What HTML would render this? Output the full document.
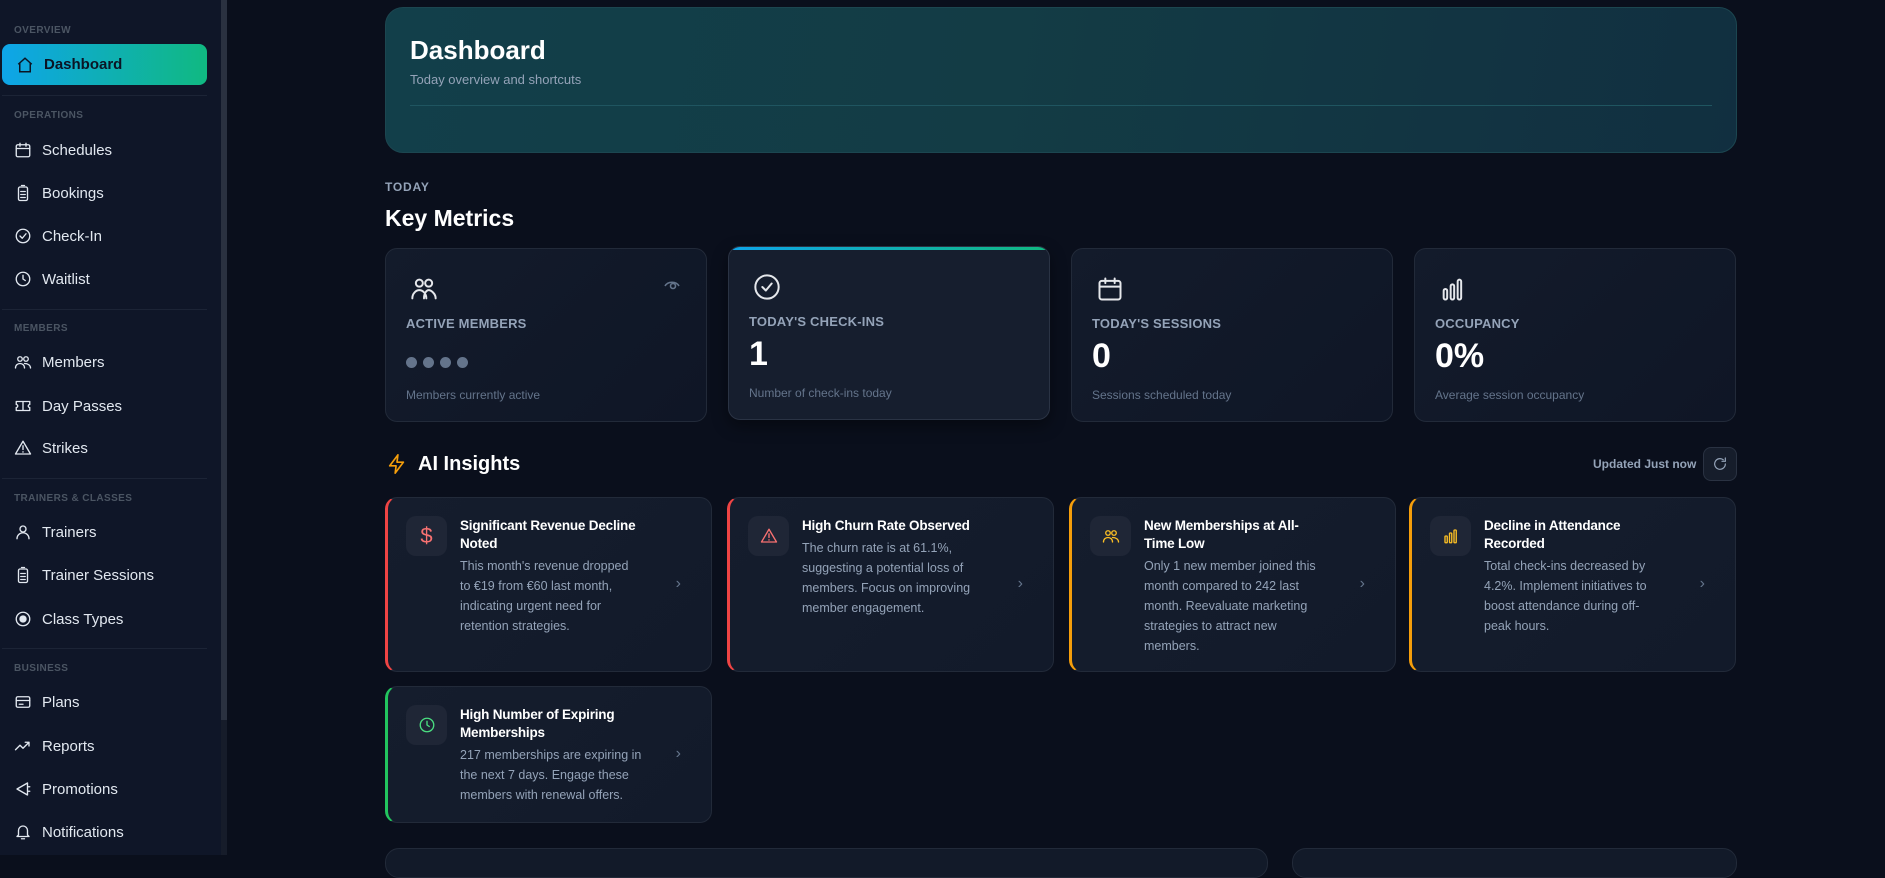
<!DOCTYPE html>
<html><head><meta charset="utf-8"><style>
*{box-sizing:border-box;margin:0;padding:0}
body{width:1885px;height:855px;overflow:hidden;background:#0a0f1c;font-family:"Liberation Sans",sans-serif;color:#e5e7eb;position:relative}
.sb{position:absolute;left:0;top:0;width:221px;height:855px;background:#0f1628}
.scroll{position:absolute;left:221px;top:0;width:6px;height:720px;background:#2a3140}
.scrolltr{position:absolute;left:221px;top:0;width:6px;height:855px;background:#161c2a}
.lbl{position:absolute;left:14px;font-size:10px;font-weight:bold;color:#4b5563;letter-spacing:.4px}
.it{position:absolute;left:14px;height:20px;display:flex;align-items:center;font-size:15px;color:#e2e8f0}
.it svg{width:18px;height:18px;margin-right:10px;stroke:#e2e8f0;fill:none;stroke-width:1.8;stroke-linecap:round;stroke-linejoin:round}
.sep{position:absolute;left:2px;width:205px;height:1px;background:#1c2436}
.act{position:absolute;left:2px;top:44px;width:205px;height:41px;border-radius:8px;background:linear-gradient(90deg,#0ea5e9,#10b981);display:flex;align-items:center;padding-left:14px;font-weight:bold;font-size:15px;color:#0b1424}
.act svg{width:18px;height:18px;margin-right:10px;stroke:#0b1424;fill:none;stroke-width:2}
.hdr{position:absolute;left:385px;top:7px;width:1352px;height:146px;border-radius:18px;background:linear-gradient(100deg,#123f4a 0%,#133c45 45%,#112f40 100%);border:1px solid #1c4650}
.card{position:absolute;top:248px;width:322px;height:174px;border-radius:12px;background:linear-gradient(135deg,#131b2b,#0f1626);border:1px solid #222a39}
.card svg.ic{position:absolute;left:24px;top:26px;width:28px;height:28px;stroke:#e5e7eb;fill:none;stroke-width:1.7;stroke-linecap:round;stroke-linejoin:round}
.card .t{position:absolute;left:20px;top:67px;font-size:13px;color:#94a3b8;font-weight:bold;letter-spacing:.2px}
.card .v{position:absolute;left:20px;top:88px;font-size:34px;font-weight:bold;color:#fff}
.card .s{position:absolute;left:20px;top:139px;font-size:12px;color:#64748b}
.ins{position:absolute;width:327px;border-radius:12px;background:linear-gradient(135deg,#151d2d,#121a2a);border:1px solid #222a39;border-left:3px solid}
.ins .b{position:absolute;left:18px;top:18px;width:41px;height:40px;border-radius:10px;background:#1f2636;display:flex;align-items:center;justify-content:center}
.ins .b svg{width:18px;height:18px;fill:none;stroke-width:1.8;stroke-linecap:round;stroke-linejoin:round}
.ins h4{position:absolute;left:72px;top:19px;width:192px;font-size:13.5px;letter-spacing:-.2px;line-height:18px;color:#fff}
.ins p{position:absolute;left:72px;width:180px;font-size:12.5px;line-height:20px;color:#94a3b8}
.ins .ch{position:absolute;right:30px;font-size:16px;color:#64748b}
</style></head><body>
<div class="sb"></div><div class="scrolltr"></div><div class="scroll"></div>
<div class="lbl" style="top:25px">OVERVIEW</div>
<div class="act"><svg viewBox="0 0 24 24"><path d="M3 11 12 3l9 8M5 9.5V21h14V9.5"/></svg>Dashboard</div>
<div class="sep" style="top:95px"></div>
<div class="lbl" style="top:110px">OPERATIONS</div>
<div class="it" style="top:140px"><svg viewBox="0 0 24 24"><rect x="3" y="5" width="18" height="16" rx="2"/><path d="M3 10h18M8 3v4M16 3v4"/></svg>Schedules</div>
<div class="it" style="top:183px"><svg viewBox="0 0 24 24"><rect x="6" y="4" width="12" height="18" rx="2"/><path d="M10 2h4M9 10h6M9 14h6M9 18h6"/></svg>Bookings</div>
<div class="it" style="top:226px"><svg viewBox="0 0 24 24"><circle cx="12" cy="12" r="9"/><path d="m8 12 3 3 5-6"/></svg>Check-In</div>
<div class="it" style="top:269px"><svg viewBox="0 0 24 24"><circle cx="12" cy="12" r="9"/><path d="M12 7v5l3 2"/></svg>Waitlist</div>
<div class="sep" style="top:309px"></div>
<div class="lbl" style="top:323px">MEMBERS</div>
<div class="it" style="top:352px"><svg viewBox="0 0 24 24"><circle cx="8" cy="8" r="3"/><circle cx="16" cy="8" r="3"/><path d="M2 20c0-4 3-6 6-6s6 2 6 6M14 14c4 0 8 2 8 6"/></svg>Members</div>
<div class="it" style="top:396px"><svg viewBox="0 0 24 24"><path d="M3 6h18v4a2 2 0 0 0 0 4v4H3v-4a2 2 0 0 0 0-4z M12 6v12"/></svg>Day Passes</div>
<div class="it" style="top:438px"><svg viewBox="0 0 24 24"><path d="M12 3 2 20h20z M12 9v5M12 17v.5"/></svg>Strikes</div>
<div class="sep" style="top:478px"></div>
<div class="lbl" style="top:493px">TRAINERS &amp; CLASSES</div>
<div class="it" style="top:522px"><svg viewBox="0 0 24 24"><circle cx="12" cy="8" r="4"/><path d="M4 21c0-5 4-8 8-8s8 3 8 8"/></svg>Trainers</div>
<div class="it" style="top:565px"><svg viewBox="0 0 24 24"><rect x="6" y="4" width="12" height="18" rx="2"/><path d="M10 2h4M9 10h6M9 14h6M9 18h6"/></svg>Trainer Sessions</div>
<div class="it" style="top:609px"><svg viewBox="0 0 24 24"><circle cx="12" cy="12" r="9"/><circle cx="12" cy="12" r="4" fill="#e2e8f0"/></svg>Class Types</div>
<div class="sep" style="top:648px"></div>
<div class="lbl" style="top:663px">BUSINESS</div>
<div class="it" style="top:692px"><svg viewBox="0 0 24 24"><rect x="3" y="5" width="18" height="14" rx="2"/><path d="M3 10h18M7 15h5"/></svg>Plans</div>
<div class="it" style="top:736px"><svg viewBox="0 0 24 24"><path d="M2 17 8 11l4 4 8-8M15 7h5v5"/></svg>Reports</div>
<div class="it" style="top:779px"><svg viewBox="0 0 24 24"><path d="M4 12 18 4v16z M18 9h3M18 15h3"/></svg>Promotions</div>
<div class="it" style="top:822px"><svg viewBox="0 0 24 24"><path d="M6 16V10a6 6 0 0 1 12 0v6l2 2H4z M10 21h4"/></svg>Notifications</div>

<div class="hdr">
<div style="position:absolute;left:24px;top:27px;font-size:26px;font-weight:bold;color:#fff">Dashboard</div>
<div style="position:absolute;left:24px;top:64px;font-size:13px;color:#94a3b8">Today overview and shortcuts</div>
<div style="position:absolute;left:24px;top:97px;width:1302px;height:1px;background:#1f5560"></div>
</div>
<div style="position:absolute;left:385px;top:180px;font-size:12px;font-weight:bold;color:#94a3b8;letter-spacing:.8px">TODAY</div>
<div style="position:absolute;left:385px;top:205px;font-size:23px;font-weight:bold;color:#fff">Key Metrics</div>

<div class="card" style="left:385px">
<svg class="ic" viewBox="0 0 24 24"><circle cx="8" cy="7" r="3"/><circle cx="16" cy="7" r="3"/><path d="M2 20c0-4 3-7 6-7s6 3 6 7M12 20c0-4 2-7 4-7s6 3 6 7"/></svg>
<svg style="position:absolute;left:278px;top:30px;width:16px;height:12px;stroke:#64748b;fill:none;stroke-width:1.6" viewBox="0 0 16 12"><path d="M1 7c3-5 11-5 14 0"/><circle cx="9" cy="7" r="2.5"/></svg>
<div class="t">ACTIVE MEMBERS</div>
<div style="position:absolute;left:20px;top:108px;display:flex;gap:6px"><i style="width:11px;height:11px;border-radius:50%;background:#64748b"></i><i style="width:11px;height:11px;border-radius:50%;background:#64748b"></i><i style="width:11px;height:11px;border-radius:50%;background:#64748b"></i><i style="width:11px;height:11px;border-radius:50%;background:#64748b"></i></div>
<div class="s">Members currently active</div></div>

<div class="card" style="left:728px;top:246px;background:#161e2e;border-color:#2a3344;overflow:hidden;box-shadow:0 6px 16px rgba(0,0,0,.4)">
<div style="position:absolute;left:0;top:0;width:100%;height:3px;background:linear-gradient(90deg,#0ea5e9,#10b981)"></div>
<svg class="ic" viewBox="0 0 24 24"><circle cx="12" cy="12" r="10"/><path d="m8 12 3 3 5-6"/></svg>
<div class="t">TODAY'S CHECK-INS</div><div class="v">1</div><div class="s">Number of check-ins today</div></div>

<div class="card" style="left:1071px">
<svg class="ic" viewBox="0 0 24 24"><rect x="3" y="5" width="18" height="16" rx="2"/><path d="M3 10h18M8 3v4M16 3v4"/></svg>
<div class="t">TODAY'S SESSIONS</div><div class="v">0</div><div class="s">Sessions scheduled today</div></div>

<div class="card" style="left:1414px">
<svg class="ic" viewBox="0 0 24 24"><rect x="4" y="12" width="3" height="9" rx="1.5"/><rect x="10" y="8" width="3" height="13" rx="1.5"/><rect x="16" y="4" width="3" height="17" rx="1.5"/></svg>
<div class="t">OCCUPANCY</div><div class="v">0%</div><div class="s">Average session occupancy</div></div>

<svg style="position:absolute;left:386px;top:452px;width:22px;height:24px;stroke:#f59e0b;fill:none;stroke-width:1.8;stroke-linejoin:round" viewBox="0 0 24 24"><path d="M13 2 4 14h7l-1 8 9-12h-7z"/></svg>
<div style="position:absolute;left:418px;top:453px;font-size:20px;font-weight:bold;color:#fff">AI Insights</div>
<div style="position:absolute;left:1593px;top:457px;font-size:12px;font-weight:bold;color:#94a3b8">Updated Just now</div>
<div style="position:absolute;left:1703px;top:447px;width:34px;height:34px;border-radius:8px;background:#161d2b;border:1px solid #2a3242"><svg style="position:absolute;left:8px;top:8px;width:16px;height:16px;stroke:#94a3b8;fill:none;stroke-width:1.8;stroke-linecap:round" viewBox="0 0 24 24"><path d="M20 12a8 8 0 1 1-3-6.3M20 3v5h-5"/></svg></div>

<div class="ins" style="left:385px;top:497px;height:175px;border-left-color:#ef4444">
<div class="b"><span style="color:#f87171;font-size:22px">$</span></div>
<h4>Significant Revenue Decline Noted</h4>
<p style="top:58px">This month's revenue dropped to €19 from €60 last month, indicating urgent need for retention strategies.</p><span class="ch" style="top:77px">›</span></div>

<div class="ins" style="left:727px;top:497px;height:175px;border-left-color:#ef4444">
<div class="b"><svg viewBox="0 0 24 24" stroke="#f87171"><path d="M12 3 2 20h20z M12 9v5M12 17v.5"/></svg></div>
<h4>High Churn Rate Observed</h4>
<p style="top:40px">The churn rate is at 61.1%, suggesting a potential loss of members. Focus on improving member engagement.</p><span class="ch" style="top:77px">›</span></div>

<div class="ins" style="left:1069px;top:497px;height:175px;border-left-color:#f59e0b">
<div class="b"><svg viewBox="0 0 24 24" stroke="#fbbf24"><circle cx="8" cy="8" r="3"/><circle cx="16" cy="8" r="3"/><path d="M2 20c0-4 3-6 6-6s6 2 6 6M14 14c4 0 8 2 8 6"/></svg></div>
<h4 style="width:175px">New Memberships at All-Time Low</h4>
<p style="top:58px">Only 1 new member joined this month compared to 242 last month. Reevaluate marketing strategies to attract new members.</p><span class="ch" style="top:77px">›</span></div>

<div class="ins" style="left:1409px;top:497px;height:175px;border-left-color:#f59e0b">
<div class="b"><svg viewBox="0 0 24 24" stroke="#fbbf24"><rect x="4" y="12" width="3" height="9" rx="1"/><rect x="10" y="8" width="3" height="13" rx="1"/><rect x="16" y="4" width="3" height="17" rx="1"/></svg></div>
<h4>Decline in Attendance Recorded</h4>
<p style="top:58px">Total check-ins decreased by 4.2%. Implement initiatives to boost attendance during off-peak hours.</p><span class="ch" style="top:77px">›</span></div>

<div class="ins" style="left:385px;top:686px;height:137px;border-left-color:#22c55e">
<div class="b"><svg viewBox="0 0 24 24" stroke="#4ade80"><circle cx="12" cy="12" r="9"/><path d="M12 7v5l3 2"/></svg></div>
<h4 style="width:175px">High Number of Expiring Memberships</h4>
<p style="top:58px;width:195px">217 memberships are expiring in the next 7 days. Engage these members with renewal offers.</p><span class="ch" style="top:58px">›</span></div>

<div style="position:absolute;left:385px;top:848px;width:883px;height:30px;border-radius:14px;background:#121a29;border:1px solid #222a39"></div>
<div style="position:absolute;left:1292px;top:848px;width:445px;height:30px;border-radius:14px;background:#121a29;border:1px solid #222a39"></div>
</body></html>
